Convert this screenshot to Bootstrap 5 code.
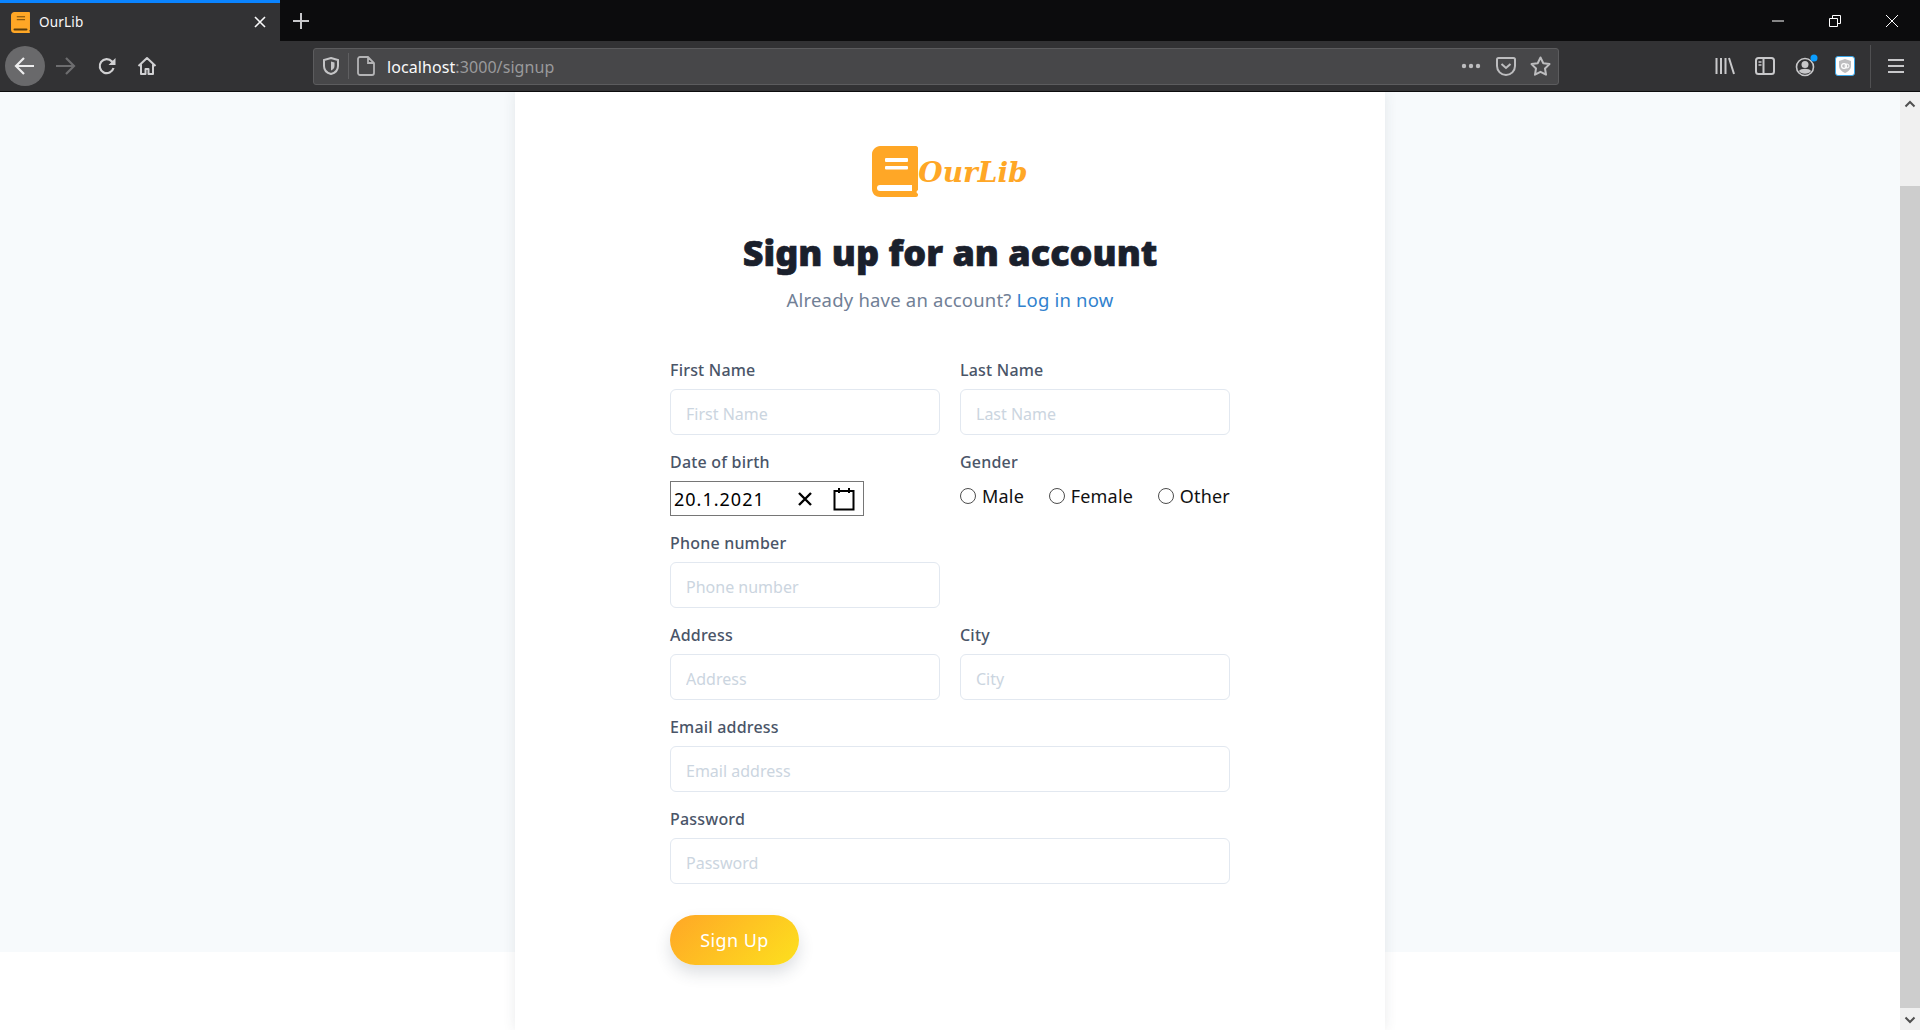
<!DOCTYPE html>
<html lang="en">
<head>
    <meta charset="UTF-8">
    <title>OurLib</title>
    <link href="https://cdn.jsdelivr.net/npm/bootstrap@5.3.0/dist/css/bootstrap.min.css" rel="stylesheet">
    <style>
        html, body { height: 1030px; overflow: hidden; }
        body { font-family: "Noto Sans", "Open Sans", sans-serif; background: #fff; color: #1a202c; }

        /* browser chrome */
        .tab-strip { height: 41px; background: #0c0c0d; }
        .tab-item { width: 280px; background: #323234; border-top: 3px solid #0a84ff; color: #f9f9fa; font-size: 13.5px; padding: 0 14px 0 11px; }
        .tab-title { margin-left: 9px; letter-spacing: .2px; }
        .new-tab { width: 42px; }
        .win-btn { width: 57px; }
        .tool-strip { height: 51px; background: #323234; border-bottom: 1px solid #0c0c0d; padding: 0 4px 0 5px; }
        .tool-btn { width: 40px; height: 40px; flex: none; }
        .tool-btn-back { background: #69696b; border-radius: 50%; width: 40px; }
        .tool-btn-reload { margin-left: 2px; }
        .url-box { width: 1246px; height: 37px; margin-left: 146px; background: #474749; border: 1px solid #5c5c5e; border-radius: 3px; font-size: 16px; }
        .url-shield { width: 34px; }
        .url-sep { width: 1px; height: 26px; background: #5f5f61; }
        .url-page { width: 34px; }
        .url-host { color: #f9f9fa; margin-left: 4px; padding-top: 2px; letter-spacing: .08px; }
        .url-rest { color: #9a9a9c; padding-top: 2px; letter-spacing: .08px; }
        .url-end { width: 35px; }
        .tool-sep { width: 1px; height: 43px; background: #505052; margin: 0 5px 0 5px; }

        /* page */
        .view-area { height: 938px; }
        .page-bg { background: linear-gradient(#f7fafc 860px, #fff 860px); }
        .signup-panel { width: 870px; min-height: 938px; background: #fff; box-shadow: 0 0 12px rgba(45, 55, 72, .1); padding-top: 54px; }
        .logo-row { height: 51px; }
        .logo-text { font-family: "DejaVu Serif", "Liberation Serif", serif; font-style: italic; font-weight: 700; font-size: 28px; line-height: 53px; color: #ffa726; }
        .signup-title { font-family: "Noto Sans", sans-serif; font-weight: 900; font-size: 36px; line-height: 40px; margin: 36px 0 0; color: #1a202c; -webkit-text-stroke: .7px #1a202c; }
        .signup-sub { font-size: 18.5px; line-height: 27px; color: #718096; margin: 13px 0 0; letter-spacing: .2px; }
        .signup-sub a { color: #3182ce; text-decoration: none; }
        .signup-form { width: 560px; margin: 44px auto 0; }
        .form-grid { --bs-gutter-x: 20px; --bs-gutter-y: 0; }
        .field-box { margin-bottom: 14px; }
        .field-label { display: block; font-size: 16px; line-height: 26px; font-weight: 500; letter-spacing: .2px; color: #4a5568; margin-bottom: 6px; }
        .field-input.form-control { height: 46px; border: 1px solid #e2e8f0; border-radius: 6px; padding: 3px 15px 0; font-size: 16px; color: #1a202c; }
        .field-input.form-control::placeholder { color: #cbd5e0; opacity: 1; }
        .date-box { width: 194px; height: 35px; border: 1px solid #767676; padding-left: 3px; }
        .date-value { width: 110px; border: 0; outline: 0; padding: 2px 0 0; font-size: 18px; letter-spacing: 1px; color: #000; background: transparent; font-family: inherit; }
        .date-clear { margin-left: auto; }
        .date-cal { margin-left: 20px; margin-right: 8px; }
        .gender-row { height: 35px; margin-top: -3px; }
        .gender-row .form-check-input { width: 16px; height: 16px; margin: 0 6px 0 0; border: 1px solid #4d4d4d; background-color: #fff; float: none; flex: none; }
        .gender-row .form-check-label { font-size: 18px; line-height: 24px; color: #111; letter-spacing: .2px; }
        .signup-btn.btn { width: 129px; height: 50px; margin-top: 17px; padding: 0; border: 0; border-radius: 25px; color: #fff; font-size: 18px; letter-spacing: .4px; background: linear-gradient(135deg, #ffa726 0%, #fde01e 100%); box-shadow: 0 8px 16px rgba(45, 55, 72, .16); }

        /* scrollbar */
        .scroll-track { width: 20px; background: #f0f0f0; flex: none; }
        .scroll-top { height: 94px; }
        .scroll-thumb { background: #cdcdcd; }
        .scroll-bottom { height: 22px; }
    </style>
</head>
<body>
    <div class="tab-strip d-flex">
        <div class="tab-item d-flex align-items-center">
            <svg width="19" height="21" viewBox="0 0 46 51"><path d="M8 0h36c1 0 2 1 2 2v42c-2 1-2 3 0 4v1c0 1-1 2-2 2H8c-4 0-8-3-8-8V8c0-4 4-8 8-8z" fill="#ffa726"/><rect x="14" y="10" width="20" height="3" fill="#8a5a10"/><rect x="14" y="17" width="20" height="3" fill="#8a5a10"/><rect x="6" y="40" width="34" height="5" rx="2.5" fill="#5a3c0c"/></svg>
            <span class="tab-title">OurLib</span>
            <svg class="ms-auto" width="12" height="12" viewBox="0 0 12 12"><path d="M1 1l10 10M11 1L1 11" stroke="#f9f9fa" stroke-width="1.6"/></svg>
        </div>
        <div class="new-tab d-flex align-items-center justify-content-center">
            <svg width="18" height="18" viewBox="0 0 18 18"><path d="M9 1v16M1 9h16" stroke="#c8c8ca" stroke-width="2"/></svg>
        </div>
        <div class="ms-auto d-flex">
            <div class="win-btn d-flex align-items-center justify-content-center">
                <svg width="12" height="12" viewBox="0 0 12 12"><path d="M0 6h12" stroke="#fff"/></svg>
            </div>
            <div class="win-btn d-flex align-items-center justify-content-center">
                <svg width="12" height="12" viewBox="0 0 12 12"><path d="M.5 3.5h8v8h-8zM3.5 3.5v-3h8v8h-3" fill="none" stroke="#fff"/></svg>
            </div>
            <div class="win-btn d-flex align-items-center justify-content-center">
                <svg width="14" height="14" viewBox="0 0 14 14"><path d="M1 1l12 12M13 1L1 13" stroke="#fff"/></svg>
            </div>
        </div>
    </div>

    <div class="tool-strip d-flex align-items-center">
        <div class="tool-btn tool-btn-back d-flex align-items-center justify-content-center">
            <svg width="22" height="20" viewBox="0 0 22 20"><path d="M10 2L2 10l8 8M2 10h18" fill="none" stroke="#ededee" stroke-width="2.2"/></svg>
        </div>
        <div class="tool-btn d-flex align-items-center justify-content-center">
            <svg width="22" height="20" viewBox="0 0 22 20"><path d="M12 2l8 8-8 8M20 10H2" fill="none" stroke="#6d6d6f" stroke-width="2.2"/></svg>
        </div>
        <div class="tool-btn tool-btn-reload d-flex align-items-center justify-content-center">
            <svg width="20" height="20" viewBox="0 0 20 20"><path d="M16.5 12a7 7 0 1 1-1.6-6.6L17 7.500" fill="none" stroke="#d0d0d2" stroke-width="2.200"/><path d="M18.500 2v7h-7z" fill="#d0d0d2"/></svg>
        </div>
        <div class="tool-btn d-flex align-items-center justify-content-center">
            <svg width="20" height="20" viewBox="0 0 20 20"><path d="M1.500 10L10 2l8.500 8M4 8.500V18h4.500v-5h3v5H16V8.500" fill="none" stroke="#d0d0d2" stroke-width="2" stroke-linejoin="round"/></svg>
        </div>

        <div class="url-box d-flex align-items-center">
            <div class="url-shield d-flex justify-content-center">
                <svg width="16" height="18" viewBox="0 0 16 18"><path d="M8 1l7 2v6c0 4-3 7-7 8-4-1-7-4-7-8V3z" fill="none" stroke="#c4c4c6" stroke-width="2"/><path d="M8 4.500l3.500 1v3.500c0 2-1.500 3.500-3.500 4.500z" fill="#c4c4c6"/></svg>
            </div>
            <div class="url-sep"></div>
            <div class="url-page d-flex justify-content-center">
                <svg width="18" height="20" viewBox="0 0 18 20"><path d="M3 1h8l6 6v10a2 2 0 0 1-2 2H3a2 2 0 0 1-2-2V3a2 2 0 0 1 2-2zM11 1v6h6" fill="none" stroke="#b4b4b6" stroke-width="1.800"/></svg>
            </div>
            <span class="url-host">localhost</span><span class="url-rest">:3000/signup</span>
            <div class="url-end ms-auto d-flex justify-content-center">
                <svg width="20" height="6" viewBox="0 0 20 6"><circle cx="3" cy="3" r="2.200" fill="#bdbdbf"/><circle cx="10" cy="3" r="2.200" fill="#bdbdbf"/><circle cx="17" cy="3" r="2.200" fill="#bdbdbf"/></svg>
            </div>
            <div class="url-end d-flex justify-content-center">
                <svg width="20" height="19" viewBox="0 0 20 19"><path d="M2.500 1h15A1.500 1.500 0 0 1 19 2.500V9a9 9 0 0 1-18 0V2.500A1.500 1.500 0 0 1 2.500 1z" fill="none" stroke="#bdbdbf" stroke-width="2"/><path d="M5.500 7l4.500 4 4.500-4" fill="none" stroke="#bdbdbf" stroke-width="2"/></svg>
            </div>
            <div class="url-end d-flex justify-content-center">
                <svg width="21" height="20" viewBox="0 0 21 20"><path d="M10.500 1.500l2.800 5.700 6.200.9-4.500 4.400 1 6.200-5.500-2.900L5 18.700l1-6.200-4.500-4.400 6.200-.9z" fill="none" stroke="#bdbdbf" stroke-width="2" stroke-linejoin="round"/></svg>
            </div>
        </div>

        <div class="ms-auto d-flex align-items-center">
            <div class="tool-btn d-flex align-items-center justify-content-center">
                <svg width="20" height="18" viewBox="0 0 20 18"><path d="M1.500 1v16M6 1v16M10.500 1v16M14 1l5 16" fill="none" stroke="#c8c8ca" stroke-width="2"/></svg>
            </div>
            <div class="tool-btn d-flex align-items-center justify-content-center">
                <svg width="20" height="18" viewBox="0 0 20 18"><rect x="1" y="1" width="18" height="16" rx="2.500" fill="none" stroke="#c8c8ca" stroke-width="2"/><path d="M8.500 1v16" stroke="#c8c8ca" stroke-width="2"/><path d="M3.500 5h3M3.500 8h3" stroke="#c8c8ca" stroke-width="1.400"/></svg>
            </div>
            <div class="tool-btn d-flex align-items-center justify-content-center">
                <svg class="ms-1" width="24" height="24" viewBox="0 0 24 24"><circle cx="10" cy="13" r="8.500" fill="none" stroke="#c8c8ca" stroke-width="1.600"/><circle cx="10" cy="10.500" r="3.500" fill="#c8c8ca"/><path d="M4 17c1.500-3 10.500-3 12 0-2 3.500-10 3.500-12 0z" fill="#c8c8ca"/><circle cx="19" cy="4" r="3.500" fill="#0a9dff"/></svg>
            </div>
            <div class="tool-btn d-flex align-items-center justify-content-center">
                <svg width="20" height="20" viewBox="0 0 20 20"><rect x=".5" y=".5" width="19" height="19" rx="2.500" fill="#fff" stroke="#3aa6e8"/><path d="M10 3l6 2v5c0 3-2.500 5.500-6 7-3.500-1.500-6-4-6-7V5z" fill="#bdbdbf"/><circle cx="9" cy="10" r="2.400" fill="none" stroke="#fff" stroke-width="1.200"/><circle cx="12" cy="10" r="2" fill="none" stroke="#fff" stroke-width="1"/></svg>
            </div>
            <div class="tool-sep"></div>
            <div class="tool-btn d-flex align-items-center justify-content-center">
                <svg width="16" height="16" viewBox="0 0 16 16"><path d="M0 2h16M0 8h16M0 14h16" stroke="#c8c8ca" stroke-width="2"/></svg>
            </div>
        </div>
    </div>

    <div class="view-area d-flex">
        <main class="page-bg flex-grow-1 d-flex justify-content-center overflow-hidden">
            <section class="signup-panel text-center">
                <div class="logo-row d-flex justify-content-center">
                    <svg width="46" height="51" viewBox="0 0 46 51"><path d="M8 0h36c1 0 2 1 2 2v42c-2 1-2 3 0 4v1c0 1-1 2-2 2H8c-4 0-8-3-8-8V8c0-4 4-8 8-8z" fill="#ffa726"/><rect x="13" y="12" width="23" height="4" rx="1" fill="#fff"/><rect x="13" y="20" width="23" height="3.500" rx="1" fill="#fff"/><path d="M8 39h32v6H8a3 3 0 0 1 0-6z" fill="#fff"/></svg>
                    <span class="logo-text">OurLib</span>
                </div>
                <h1 class="signup-title">Sign up for an account</h1>
                <p class="signup-sub">Already have an account? <a href="#">Log in now</a></p>

                <form class="signup-form text-start">
                    <div class="row form-grid">
                        <div class="col-6 field-box">
                            <label class="field-label" for="first-name">First Name</label>
                            <input class="form-control field-input" id="first-name" type="text" placeholder="First Name">
                        </div>
                        <div class="col-6 field-box">
                            <label class="field-label" for="last-name">Last Name</label>
                            <input class="form-control field-input" id="last-name" type="text" placeholder="Last Name">
                        </div>
                        <div class="col-6 field-box">
                            <label class="field-label" for="dob">Date of birth</label>
                            <div class="date-box d-flex align-items-center">
                                <input class="date-value" id="dob" type="text" value="20.1.2021">
                                <svg class="date-clear" width="16" height="16" viewBox="0 0 16 16"><path d="M2 2l12 12M14 2L2 14" stroke="#000" stroke-width="2.400"/></svg>
                                <svg class="date-cal" width="22" height="24" viewBox="0 0 22 24"><path d="M1.500 4h19v18.500h-19z" fill="none" stroke="#000" stroke-width="2"/><path d="M6 1v5M16 1v5" stroke="#000" stroke-width="2"/></svg>
                            </div>
                        </div>
                        <div class="col-6 field-box">
                            <span class="field-label">Gender</span>
                            <div class="gender-row d-flex align-items-center justify-content-between">
                                <div class="form-check d-flex align-items-center m-0 p-0">
                                    <input class="form-check-input" type="radio" name="gender" id="g-male">
                                    <label class="form-check-label" for="g-male">Male</label>
                                </div>
                                <div class="form-check d-flex align-items-center m-0 p-0">
                                    <input class="form-check-input" type="radio" name="gender" id="g-female">
                                    <label class="form-check-label" for="g-female">Female</label>
                                </div>
                                <div class="form-check d-flex align-items-center m-0 p-0">
                                    <input class="form-check-input" type="radio" name="gender" id="g-other">
                                    <label class="form-check-label" for="g-other">Other</label>
                                </div>
                            </div>
                        </div>
                        <div class="col-6 field-box">
                            <label class="field-label" for="phone">Phone number</label>
                            <input class="form-control field-input" id="phone" type="text" placeholder="Phone number">
                        </div>
                        <div class="col-6 field-box"></div>
                        <div class="col-6 field-box">
                            <label class="field-label" for="address">Address</label>
                            <input class="form-control field-input" id="address" type="text" placeholder="Address">
                        </div>
                        <div class="col-6 field-box">
                            <label class="field-label" for="city">City</label>
                            <input class="form-control field-input" id="city" type="text" placeholder="City">
                        </div>
                        <div class="col-12 field-box">
                            <label class="field-label" for="email">Email address</label>
                            <input class="form-control field-input" id="email" type="email" placeholder="Email address">
                        </div>
                        <div class="col-12 field-box">
                            <label class="field-label" for="password">Password</label>
                            <input class="form-control field-input" id="password" type="password" placeholder="Password">
                        </div>
                    </div>
                    <button class="btn signup-btn" type="button">Sign Up</button>
                </form>
            </section>
        </main>

        <div class="scroll-track d-flex flex-column">
            <div class="scroll-top text-center">
                <svg class="d-block mx-auto mt-2" width="12" height="8" viewBox="0 0 12 8"><path d="M1.500 6.500L6 2l4.500 4.500" fill="none" stroke="#505050" stroke-width="2"/></svg>
            </div>
            <div class="scroll-thumb flex-grow-1"></div>
            <div class="scroll-bottom text-center">
                <svg class="d-block mx-auto mt-2" width="12" height="8" viewBox="0 0 12 8"><path d="M1.500 6.500L6 2l4.500 4.500" fill="none" stroke="#505050" stroke-width="2" transform="rotate(180 6 4)"/></svg>
            </div>
        </div>
    </div>

    <script src="https://cdn.jsdelivr.net/npm/bootstrap@5.3.0/dist/js/bootstrap.bundle.min.js"></script>
</body>
</html>
